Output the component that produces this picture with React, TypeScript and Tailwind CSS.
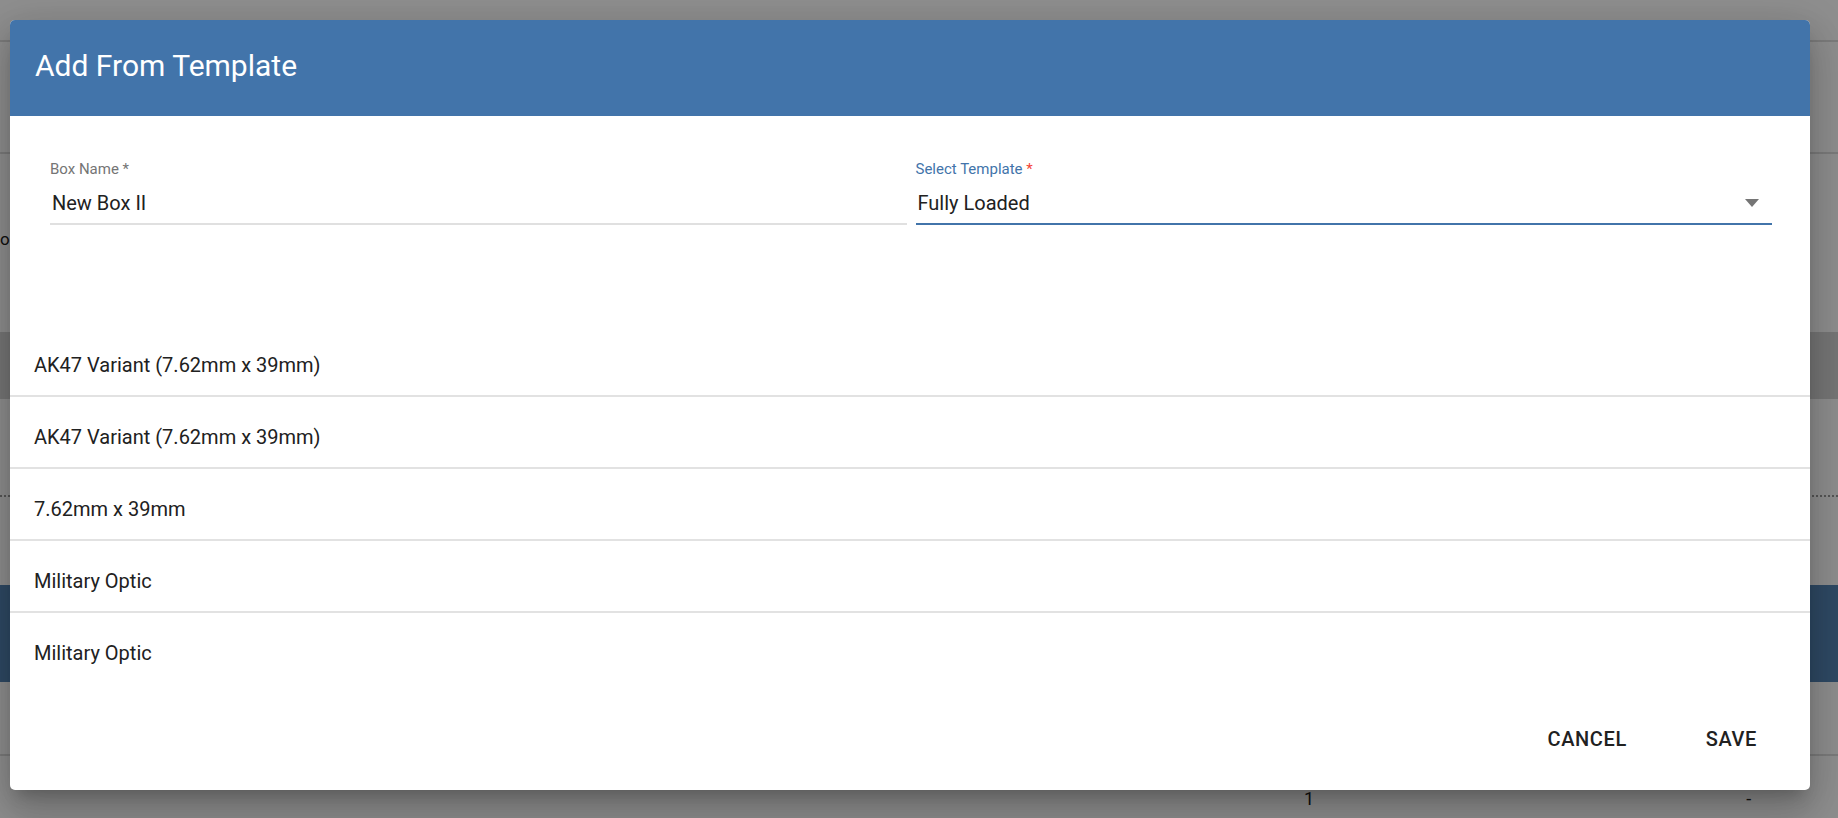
import React from 'react';

const templateItems = [
  'AK47 Variant (7.62mm x 39mm)',
  'AK47 Variant (7.62mm x 39mm)',
  '7.62mm x 39mm',
  'Military Optic',
  'Military Optic',
];

// Page underneath the modal, dimmed by the backdrop
function PageBehind() {
  return (
    <div className="flex h-full flex-col bg-white text-[#212121]">
      <div className="h-[42px] shrink-0 border-b-2 border-[#dedede]" />
      <div className="h-[112px] shrink-0 border-b-2 border-[#dedede]" />
      <div className="h-[178px] shrink-0 pt-[74px]">
        <span className="block text-[17px] leading-[22px]">os</span>
      </div>
      <div className="h-[67px] shrink-0 bg-[#d4d4d4]" />
      <div className="h-[186px] shrink-0 pt-[96px]">
        <div className="border-b-2 border-dotted border-[#9a9a9a]" />
      </div>
      <div className="h-[97px] shrink-0 bg-[#5585b5]" />
      <div className="h-[74px] shrink-0 border-b-2 border-[#dedede]" />
      <div className="flex pt-[32px] text-[18px] leading-[22px]">
        <span className="ml-[1304px]">1</span>
        <span className="ml-[432px]">-</span>
      </div>
    </div>
  );
}

function TextField({ label, value, required, focused, select }: { label: string; value: string; required?: boolean; focused?: boolean; select?: boolean }) {
  return (
    <div className={`flex flex-col border-b-2 pb-[8px] ${focused ? 'border-[#4274aa]' : 'border-[#e0e0e0]'}`}>
      <label className={`text-[15px] leading-[15px] ${focused ? 'text-[#4274aa]' : 'text-[#757575]'}`}>
        {label}
        {required && <span className={focused ? 'text-[#f44336]' : ''}> *</span>}
      </label>
      <div className="mt-[14px] flex h-[24px] items-center justify-between">
        <span className="pl-[2px] text-[20px] leading-[24px] text-[#212121]">{value}</span>
        {select && (
          <svg width="14" height="8" viewBox="0 0 14 8" className="mr-[13px] fill-[#757575]">
            <polygon points="0,0 14,0 7,8" />
          </svg>
        )}
      </div>
    </div>
  );
}

export default function App() {
  return (
    <div className="relative h-[818px] w-full overflow-hidden font-[Roboto,sans-serif]">
      <PageBehind />
      <div className="absolute inset-0 bg-black/[0.44]" />

      <div className="absolute left-[10px] top-[20px] flex w-[1800px] flex-col overflow-hidden rounded-[5px] bg-white shadow-[0_11px_15px_-7px_rgba(0,0,0,0.2),0_24px_38px_3px_rgba(0,0,0,0.14),0_9px_46px_8px_rgba(0,0,0,0.12)]">
        <div className="h-[96px] bg-[#4274aa] pl-[25px] pt-[28px]">
          <h2 className="text-[30px] font-normal leading-[36px] text-white">Add From Template</h2>
        </div>

        <div className="grid grid-cols-2 gap-[9px] pl-[40px] pr-[38px] pt-[46px]">
          <TextField label="Box Name" value="New Box II" required />
          <TextField label="Select Template" value="Fully Loaded" required focused select />
        </div>

        <ul className="mt-[100px]">
          {templateItems.map((item, i) => (
            <li
              key={i}
              className="border-b-2 border-[#e2e2e2] pb-[15px] pl-6 pt-[25px] text-[20px] leading-[30px] text-[#212121] last:border-b-0"
            >
              {item}
            </li>
          ))}
        </ul>

        <div className="flex justify-end gap-[39px] pb-[29px] pr-[33px] pt-[34px]">
          <button className="px-5 py-[10px] text-[20px] font-medium uppercase leading-[24px] tracking-[0.03em] text-[#212121]">
            Cancel
          </button>
          <button className="px-5 py-[10px] text-[20px] font-medium uppercase leading-[24px] tracking-[0.03em] text-[#212121]">
            Save
          </button>
        </div>
      </div>
    </div>
  );
}
